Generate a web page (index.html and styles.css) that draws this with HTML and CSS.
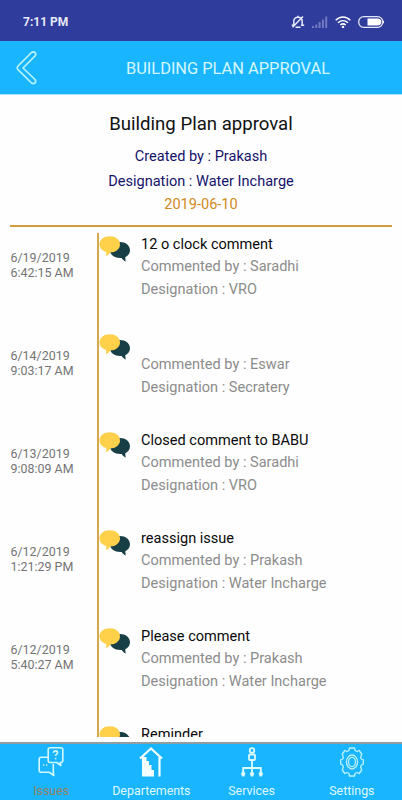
FILE: index.html
```html
<!DOCTYPE html>
<html lang="en">
<head>
<meta charset="utf-8">
<title>Building Plan Approval</title>
<link rel="stylesheet" href="styles.css">
</head>
<body>
<svg class="defs" width="0" height="0">
  <symbol id="chat" viewBox="0 0 31 26">
    <path fill="#183f46" d="M21 6c5.500 0 10 3.500 10 8.200 0 3-2 5.700-4.700 7 .1 1.500.2 2.900.4 4.300-1.600-.8-3-2-4-3.600C16 22.400 11 19 11 14.200 11 9.500 15.500 6 21 6z"/>
    <path fill="#ffd04a" d="M10.800.3C16.500.3 21 3.700 21 8.400s-4.500 8-10 8c-.6 1.600-2 3-4.300 3.800.6-1.300.7-2.700.4-4.400C3.300 14.700.5 12 .5 8.400.5 3.700 5 .3 10.800.3z"/>
  </symbol>
</svg>
<div class="phone">
  <div class="status">
    <span class="clock">7:11 PM</span>
    <svg class="bell" width="14" height="14" viewBox="0 0 14 14" fill="none" stroke="#e8ebf8" stroke-width="1.500">
      <path d="M2.800 10V6.500C2.800 3.500 4.500 2.300 7 2.300s4.200 1.200 4.200 4.200V10M.8 10.300h3M10 10.300h3.200M4.500 12.300h5M1.500 12.300 12 1.500M7 .8v1.500"/>
    </svg>
    <svg class="signal" width="16" height="12" viewBox="0 0 16 12" fill="#7079c2">
      <path d="M0 10h2v2H0zM3.300 8.500h2V12h-2zM6.600 6h2v6h-2zM9.900 3.500h2V12h-2zM13.200.5h2V12h-2z"/>
    </svg>
    <svg class="wifi" width="16" height="12" viewBox="0 0 16 12" fill="none" stroke="#fff" stroke-width="1.500">
      <path d="M.7 4.300C5-.1 11-.1 15.300 4.300M3 6.700c3-2.700 7-2.700 10 0M5.300 9c1.700-1.400 3.700-1.400 5.400 0"/><circle cx="8" cy="11" r=".5"/>
    </svg>
    <svg class="battery" width="27" height="12" viewBox="0 0 27 12">
      <rect x=".7" y=".7" width="24" height="10.600" rx="5" fill="none" stroke="#e5e8f8" stroke-width="1.300"/>
      <path fill="#fff" d="M9.500 2.500H20c2 0 3.300 1.500 3.300 3.500S22 9.500 20 9.500H9.500zM25 4.300c1.300.6 1.300 2.800 0 3.400z"/>
    </svg>
  </div>
  <header class="bar">
    <svg class="back" width="22" height="34" viewBox="0 0 22 34" fill="none" stroke="#b5f3ff" stroke-width="1.700" stroke-linejoin="round">
      <path d="M15.500 1.500 2 15q-1.500 1.800 0 3.600L15.500 32q1.700 1.200 3.500 0 1.500-1.800 0-3.500L7 17 19 5q1.500-1.700 0-3.500-1.800-1.200-3.500 0z"/>
    </svg>
    <h1 class="bar-title">BUILDING PLAN APPROVAL</h1>
  </header>
  <section class="summary">
    <h2 class="name">Building Plan approval</h2>
    <p class="by">Created by : Prakash</p>
    <p class="by">Designation : Water Incharge</p>
    <p class="date">2019-06-10</p>
  </section>
  <main class="timeline">
    <article class="entry">
      <time class="when">6/19/2019<br>6:42:15 AM</time>
      <div class="mark"><svg class="chat"><use href="#chat"/></svg></div>
      <div class="text"><h3>12 o clock comment</h3><p>Commented by : Saradhi</p><p>Designation : VRO</p></div>
    </article>
    <article class="entry">
      <time class="when">6/14/2019<br>9:03:17 AM</time>
      <div class="mark"><svg class="chat"><use href="#chat"/></svg></div>
      <div class="text"><h3></h3><p>Commented by : Eswar</p><p>Designation : Secratery</p></div>
    </article>
    <article class="entry">
      <time class="when">6/13/2019<br>9:08:09 AM</time>
      <div class="mark"><svg class="chat"><use href="#chat"/></svg></div>
      <div class="text"><h3>Closed comment to BABU</h3><p>Commented by : Saradhi</p><p>Designation : VRO</p></div>
    </article>
    <article class="entry">
      <time class="when">6/12/2019<br>1:21:29 PM</time>
      <div class="mark"><svg class="chat"><use href="#chat"/></svg></div>
      <div class="text"><h3>reassign issue</h3><p>Commented by : Prakash</p><p>Designation : Water Incharge</p></div>
    </article>
    <article class="entry">
      <time class="when">6/12/2019<br>5:40:27 AM</time>
      <div class="mark"><svg class="chat"><use href="#chat"/></svg></div>
      <div class="text"><h3>Please comment</h3><p>Commented by : Prakash</p><p>Designation : Water Incharge</p></div>
    </article>
    <article class="entry">
      <div class="when"></div>
      <div class="mark"><svg class="chat"><use href="#chat"/></svg></div>
      <div class="text"><h3>Reminder</h3></div>
    </article>
  </main>
  <nav class="tabs">
    <a class="tab active">
      <svg width="26" height="30" viewBox="0 0 26 30" fill="none" stroke="#d3f8ff" stroke-width="1.600" stroke-linejoin="round">
        <path d="M12.200.8h10.600q2 0 2 2v10.700q0 2-2 2h-.5l.5 3-4-3h-6.600q-2 0-2-2V2.800q0-2 2-2z"/>
        <path d="M10 10.300H3.200q-2 0-2 2v11q0 2 2 2h8.300l4.300 3.200-.5-3.500V17"/>
        <path d="M15.600 5.700c0-2.400 4-2.400 4 0 0 1.600-2 1.500-2 3.300M17.600 11v1.300M5 18h1.300M8 18h1.300"/>
      </svg>
      <span>Issues</span>
    </a>
    <a class="tab">
      <svg width="24" height="30" viewBox="0 0 24 30" fill="#f3feff">
        <path d="M3 10h4.500v4H10v4h2.500v5H15v6.500H3z"/>
        <path d="M1 11.500 12 1.500l11 10M20.500 9.500v20M4 9.500V15" fill="none" stroke="#f3feff" stroke-width="2.200"/>
      </svg>
      <span>Departements</span>
    </a>
    <a class="tab">
      <svg width="22" height="30" viewBox="0 0 22 30" fill="none" stroke="#dcfbff" stroke-width="1.800">
        <circle cx="11" cy="3.500" r="2.300"/><rect x="8" y="7.500" width="6" height="5.500" rx="1"/>
        <path d="M11 13v13M2.200 25v-4h17.600v4"/>
        <path fill="#dcfbff" stroke="none" d="M2.200 23.500l2.200 3-1 3H1l-1-3zM11 23.500l2.200 3-1 3H9.800l-1-3zM19.800 23.500l2.200 3-1 3h-2.400l-1-3z"/>
      </svg>
      <span>Services</span>
    </a>
    <a class="tab">
      <svg width="24" height="30" viewBox="0 0 24 30" fill="none" stroke="#b9f2ff" stroke-width="1.300" stroke-linejoin="round">
        <path d="M9.500 1h5l.6 2.500 2 1L19.200 3.500l2.500 3.500-1 3 .6 2 2 .8v4.400l-2 .8-.6 2 1 3-2.500 3.500-2.100-1-2 1-.6 2.500h-5l-.6-2.500-2-1-2.100 1L2.300 23l1-3-.6-2-2-.8v-4.400l2-.8.6-2-1-3 2.500-3.500 2.100 1 2-1z"/>
        <ellipse cx="12" cy="15" rx="5.600" ry="7"/><ellipse cx="12" cy="15" rx="3.500" ry="4.700"/>
      </svg>
      <span>Settings</span>
    </a>
  </nav>
</div>
</body>
</html>
```
FILE: styles.css
```css
* { box-sizing: border-box; margin: 0; padding: 0; }
body { font-family: Roboto, "Liberation Sans", sans-serif; background: #fefefe; }
h1, h2, h3 { font-weight: 400; }
.defs { display: block; }
.phone { width: 402px; height: 800px; display: flex; flex-direction: column; overflow: hidden; }
.status { flex: none; height: 41px; padding: 2px 17px 0 23px; display: flex; align-items: center; background: #303c9c; }
.clock { flex: 1; font-size: 12px; font-weight: 700; color: #e6e9f6; }
.bell { margin-right: 7px; }
.signal { margin-right: 7px; }
.wifi { margin-right: 7px; }
.bar { flex: none; height: 54px; display: flex; align-items: center; background: #1ab5ff; border-bottom: 1px solid #a9e0fb; }
.back { flex: none; margin-left: 16px; }
.bar-title { margin-left: 88px; padding-top: 2px; font-size: 16.400px; line-height: 20px; white-space: nowrap; color: #d4f8ff; }
.summary { flex: none; height: 132px; margin: 0 10px; border-bottom: 2px solid #d29b3c; text-align: center; }
.name { padding-top: 17px; font-size: 18.600px; line-height: 24px; color: #111; }
.by { font-size: 14.550px; line-height: 25px; color: #16126b; }
.name + .by { margin-top: 8px; }
.date { font-size: 14.550px; line-height: 21px; color: #d08a20; }
.timeline { flex: none; height: 504px; margin-top: 6px; overflow: hidden; }
.entry { display: flex; height: 98px; }
.when { width: 97px; padding: 18px 0 0 10.500px; font-size: 12.450px; line-height: 14.500px; color: #747474; }
.mark { width: 44px; border-left: 2px solid #d6a84b; }
.chat { display: block; width: 31px; height: 26px; margin: 3px 0 0 -.5px; }
.text { font-size: 14.550px; line-height: 23px; color: #8c8c8c; white-space: nowrap; }
.text h3 { height: 22px; font-size: 14.550px; line-height: 23px; color: #0a0a0a; }
.tabs { flex: none; height: 58px; margin-top: 5px; padding-left: 1px; display: flex; background: #1ab5ff; border-top: 2px solid #8f9ea3; }
.tab { flex: 1; display: flex; flex-direction: column; align-items: center; padding-top: 3px; font-size: 12.400px; line-height: 14px; color: #dff8ff; }
.tab svg { margin-bottom: 7px; }
.active { color: #96805f; }
```
